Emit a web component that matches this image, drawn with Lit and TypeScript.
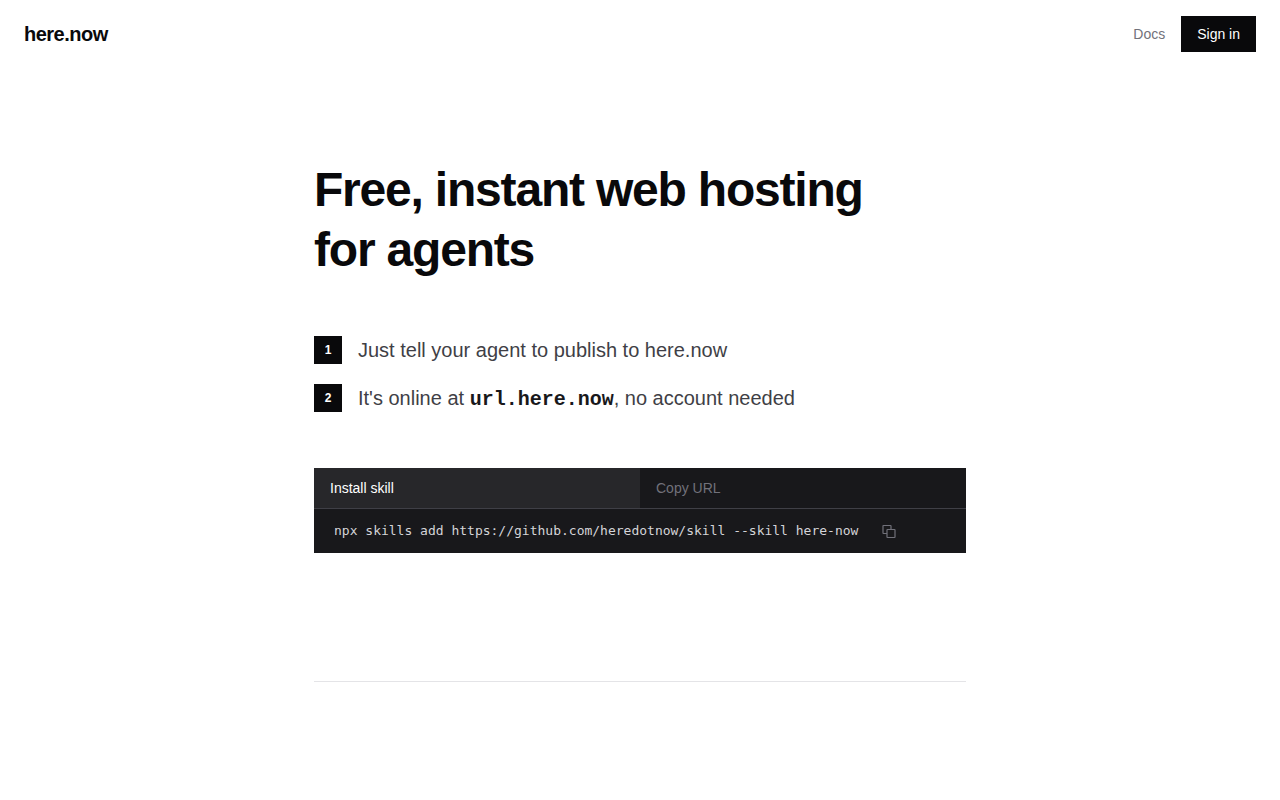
import { LitElement, html, css } from "lit";
import { customElement, state } from "lit/decorators.js";

@customElement("app-root")
export class AppRoot extends LitElement {
  @state() private tab = 0;

  static styles = css`
    :host {
      display: block;
      min-height: 100vh;
      background: #fff;
      color: #09090b;
      font-family: "Liberation Sans", Arial, sans-serif;
      font-size: 14px;
      line-height: 20px;
    }
    * { box-sizing: border-box; }
    a { color: inherit; text-decoration: none; }
    button { font: inherit; border: 0; margin: 0; cursor: pointer; border-radius: 0; }
    header {
      display: flex;
      align-items: center;
      justify-content: space-between;
      padding: 16px 24px;
    }
    .brand { font-size: 20px; line-height: 28px; font-weight: 600; letter-spacing: -0.5px; }
    nav { display: flex; align-items: center; gap: 16px; }
    .docs { color: #71717a; }
    .sign { background: #09090b; color: #fff; padding: 8px 16px; }
    main { max-width: 700px; margin: 0 auto; padding: 92px 24px 0; }
    h1 { margin: 0 0 56px; font-size: 48px; line-height: 60px; font-weight: 600; letter-spacing: -1.2px; }
    ol { list-style: none; margin: 0 0 56px; padding: 0; display: grid; gap: 20px; }
    li { display: flex; align-items: center; gap: 16px; font-size: 20px; line-height: 28px; color: #3f3f46; }
    .num {
      width: 28px; height: 28px; background: #09090b; color: #fff;
      font-size: 12px; font-weight: 600; text-align: center;
    }
    .mono { font-family: "Liberation Mono", monospace; font-weight: 600; line-height: 20px; color: #18181b; }
    .panel { background: #18181b; }
    .tabs { display: flex; border-bottom: 1px solid #3f3f46; }
    .tab { flex: 1; padding: 10px 16px; text-align: left; background: #18181b; color: #71717a; }
    .tab.on { background: #27272a; color: #fff; }
    .cmd { display: flex; align-items: center; gap: 24px; padding: 12px 20px; color: #d4d4d8; }
    code { font-family: "DejaVu Sans Mono", monospace; font-size: 13px; line-height: 20px; }
    .copy { display: flex; padding: 0; background: none; color: #71717a; }
    hr { margin: 128px 0 0; border: 0; border-top: 1px solid #e4e4e7; }
  `;

  render() {
    return html`
      <header>
        <a class="brand" href="#">here.now</a>
        <nav>
          <a class="docs" href="#docs">Docs</a>
          <button class="sign">Sign in</button>
        </nav>
      </header>
      <main>
        <h1>Free, instant web hosting<br />for agents</h1>
        <ol>
          <li><span class="num">1</span><span>Just tell your agent to publish to here.now</span></li>
          <li><span class="num">2</span><span>It's online at <span class="mono">url.here.now</span>, no account needed</span></li>
        </ol>
        <section class="panel">
          <div class="tabs">
            ${["Install skill", "Copy URL"].map((label, i) => html`
              <button class="tab ${this.tab === i ? "on" : ""}" @click=${() => (this.tab = i)}>${label}</button>`)}
          </div>
          <div class="cmd">
            <code>npx skills add https://github.com/heredotnow/skill --skill here-now</code>
            <button class="copy" aria-label="Copy">
              <svg width="14" height="16" viewBox="0 0 14 16" fill="none" stroke="currentColor" stroke-width="1.2">
                <rect x="5" y="6.500" width="8" height="8" rx="0.5" />
                <path d="M5 10.500H1.500a.5.5 0 0 1-.5-.5V3a.5.5 0 0 1 .5-.5H8.500a.5.5 0 0 1 .5.5V6.500" />
              </svg>
            </button>
          </div>
        </section>
        <hr />
      </main>
    `;
  }
}
